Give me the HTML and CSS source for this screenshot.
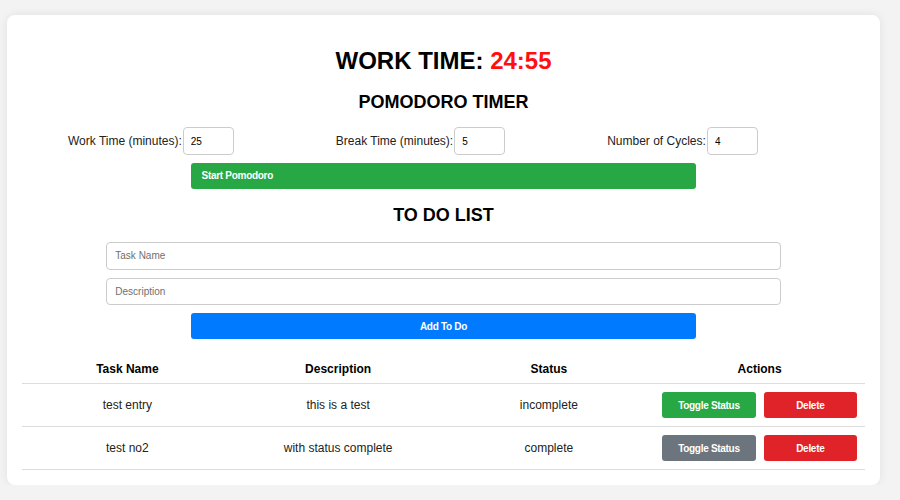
FILE: index.html
```html
<!DOCTYPE html>
<html>
<head>
<meta charset="utf-8">
<link rel="stylesheet" href="styles.css">
</head>
<body>
<div class="card">
  <h1 class="timer">WORK TIME: <span class="time">24:55</span></h1>
  <h2 class="section">POMODORO TIMER</h2>
  <div class="settings">
    <label class="field">Work Time (minutes):<input class="num" type="text" value="25"></label>
    <label class="field">Break Time (minutes):<input class="num" type="text" value="5"></label>
    <label class="field">Number of Cycles:<input class="num" type="text" value="4"></label>
  </div>
  <button class="btn btn-start">Start Pomodoro</button>
  <h2 class="section todo-title">TO DO LIST</h2>
  <input class="text-in" type="text" placeholder="Task Name">
  <input class="text-in" type="text" placeholder="Description">
  <button class="btn btn-add">Add To Do</button>
  <table class="tasks">
    <thead>
      <tr><th>Task Name</th><th>Description</th><th>Status</th><th>Actions</th></tr>
    </thead>
    <tbody>
      <tr>
        <td>test entry</td><td>this is a test</td><td>incomplete</td>
        <td><div class="actions"><button class="btn btn-green">Toggle Status</button><button class="btn btn-red">Delete</button></div></td>
      </tr>
      <tr>
        <td>test no2</td><td>with status complete</td><td>complete</td>
        <td><div class="actions"><button class="btn btn-gray">Toggle Status</button><button class="btn btn-red">Delete</button></div></td>
      </tr>
    </tbody>
  </table>
</div>
</body>
</html>
```

FILE: styles.css
```css
* { box-sizing: border-box; }
body {
  margin: 0;
  background: #f3f3f3;
  font-family: "Liberation Sans", Arial, sans-serif;
  color: #222;
}
.card {
  width: 873px;
  margin: 15px 0 0 7px;
  height: 470px;
  background: #fff;
  border-radius: 8px;
  box-shadow: 0 0 10px rgba(0,0,0,0.08);
  padding: 15px;
  display: flex;
  flex-direction: column;
  align-items: center;
}
.timer {
  font-size: 24px;
  font-weight: bold;
  margin: 17px 0 0;
  line-height: 28px;
  color: #000;
}
.time { color: #ff1010; }
.section {
  font-size: 18px;
  font-weight: bold;
  margin: 16px 0 0;
  line-height: 22px;
  color: #000;
}
.settings {
  align-self: stretch;
  display: flex;
  gap: 102px;
  padding-left: 46px;
  margin-top: 14px;
}
.field {
  display: flex;
  align-items: center;
  font-size: 12px;
  color: #222;
}
.num {
  width: 51px;
  height: 28px;
  margin-left: 1px;
  border: 1px solid #ccc;
  border-radius: 4px;
  padding: 0 7px;
  font-family: inherit;
  font-size: 10px;
  color: #000;
}
.btn {
  border: none;
  border-radius: 3px;
  color: #fff;
  font-family: inherit;
  font-size: 10px;
  font-weight: bold;
  letter-spacing: -0.3px;
  height: 26px;
  cursor: pointer;
}
.btn-start {
  width: 60%;
  margin-top: 8px;
  background: #28a745;
  text-align: left;
  padding: 0 11px;
}
.todo-title { margin-top: 15px; }
.text-in {
  width: 80%;
  height: 28px;
  margin-top: 16px;
  border: 1px solid #ccc;
  border-radius: 4px;
  padding: 0 8px;
  font-family: inherit;
  font-size: 10px;
}
.text-in + .text-in { margin-top: 8px; }
.text-in::placeholder { color: #6f6f6f; }
.btn-add {
  width: 60%;
  margin-top: 8px;
  background: #007bff;
}
.tasks {
  width: 100%;
  margin-top: 13px;
  border-collapse: collapse;
  table-layout: fixed;
  font-size: 12px;
}
.tasks th, .tasks td {
  text-align: center;
  border-bottom: 1px solid #ddd;
  padding: 8px;
  line-height: 15px;
}
.tasks th { color: #000; font-weight: bold; padding: 10px 8px 6px; }
.tasks td { color: #222; }
.actions { display: flex; gap: 8px; }
.actions .btn { flex: 1; border-radius: 3px; }
.btn-green { background: #28a745; }
.btn-gray { background: #6c757d; }
.btn-red { background: #e02328; }
```
